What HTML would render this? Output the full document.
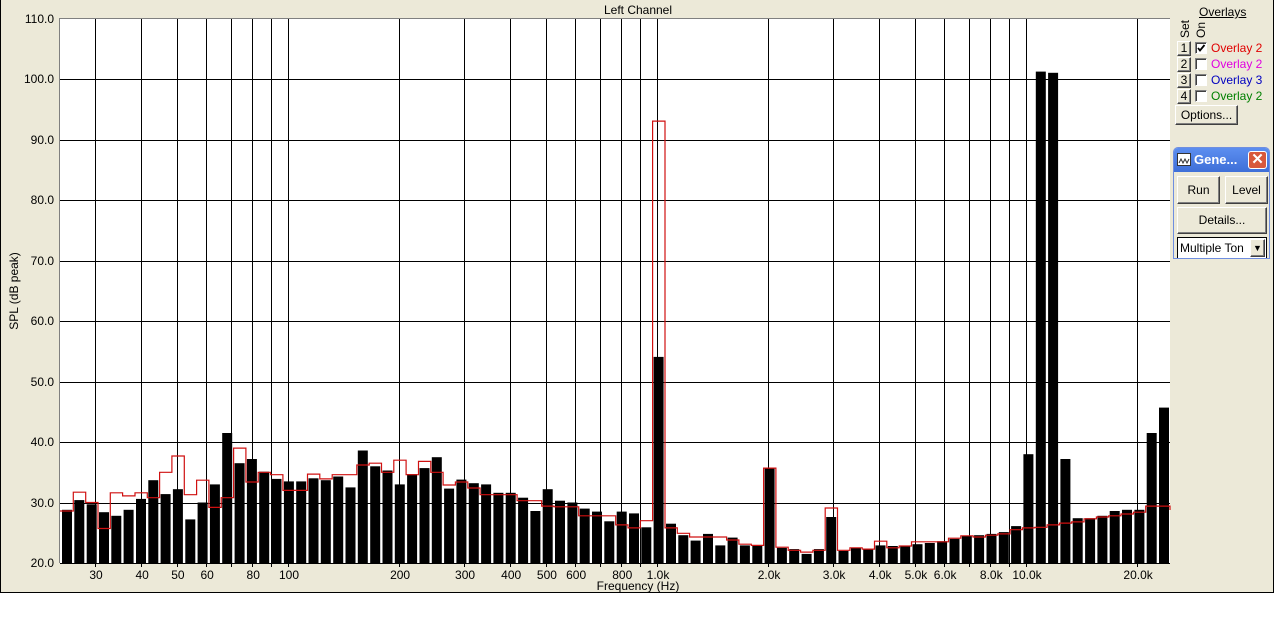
<!DOCTYPE html>
<html><head><meta charset="utf-8">
<style>
html,body{margin:0;padding:0;background:#fff;width:1274px;height:637px;overflow:hidden;font-family:"Liberation Sans",sans-serif;}
#win{position:absolute;left:0;top:0;width:1272px;height:592px;background:#ece9d8;border:1px solid #000;border-top:none;}
svg text{font-family:"Liberation Sans",sans-serif;font-size:12px;fill:#000;}
.btn{position:absolute;background:#ece9d8;border:1px solid;border-color:#fff #404040 #404040 #fff;box-shadow:inset -1px -1px 0 #808080;font-size:12px;text-align:center;box-sizing:border-box;}
.cb{position:absolute;width:12px;height:12px;background:#fff;border:1px solid;border-color:#808080 #fff #fff #808080;box-shadow:inset 1px 1px 0 #404040;box-sizing:border-box;}
.lab{position:absolute;font-size:12px;}
</style></head><body>
<div id="win">
<svg id="ch" width="1274" height="600" style="position:absolute;left:0;top:0"></svg>

<div class="lab" style="left:1198px;top:5px;text-decoration:underline;">Overlays</div>
<div class="lab" style="left:1177px;top:38px;transform:rotate(-90deg);transform-origin:0 0;">Set</div>
<div class="lab" style="left:1193px;top:38px;transform:rotate(-90deg);transform-origin:0 0;">On</div>

<div class="btn" style="left:1176px;top:41px;width:14px;height:15px;line-height:13px;">1</div>
<div class="btn" style="left:1176px;top:57px;width:14px;height:15px;line-height:13px;">2</div>
<div class="btn" style="left:1176px;top:73px;width:14px;height:15px;line-height:13px;">3</div>
<div class="btn" style="left:1176px;top:89px;width:14px;height:15px;line-height:13px;">4</div>
<div class="cb" style="left:1194px;top:42px;"><svg width="10" height="10" style="position:absolute;left:0;top:0"><path d="M2 5 L4 7.5 L8.5 2" stroke="#000" stroke-width="1.8" fill="none"/></svg></div>
<div class="cb" style="left:1194px;top:58px;"></div>
<div class="cb" style="left:1194px;top:74px;"></div>
<div class="cb" style="left:1194px;top:90px;"></div>
<div class="lab" style="left:1210px;top:41px;color:#e00000;">Overlay 2</div>
<div class="lab" style="left:1210px;top:57px;color:#e000e0;">Overlay 2</div>
<div class="lab" style="left:1210px;top:73px;color:#0000c0;">Overlay 3</div>
<div class="lab" style="left:1210px;top:89px;color:#008000;">Overlay 2</div>
<div class="btn" style="left:1174px;top:105px;width:63px;height:20px;line-height:18px;">Options...</div>

<div style="position:absolute;left:1172px;top:147px;width:97px;height:112px;background:#ece9d8;border:1px solid #6f8ee0;box-sizing:border-box;border-radius:5px 5px 0 0;overflow:hidden;">
  <div style="height:24px;background:linear-gradient(#5c8ef0,#3e6fd8);position:relative;">
    <div style="position:absolute;left:3px;top:5px;width:14px;height:13px;background:#fff;border:1px solid #333;box-sizing:border-box;"><svg width="12" height="11"><path d="M1 7 L3 3 L5 7 L7 3 L9 7 L11 3" stroke="#333" fill="none"/></svg></div>
    <div style="position:absolute;left:20px;top:4px;color:#fff;font-weight:bold;font-size:13px;">Gene...</div>
    <div style="position:absolute;left:74px;top:3px;width:19px;height:18px;background:#d8583c;border:1px solid #fff;box-sizing:border-box;border-radius:3px;color:#fff;text-align:center;font-size:15px;line-height:16px;font-weight:bold;">✕</div>
  </div>
  <div class="btn" style="left:3px;top:28px;width:43px;height:28px;line-height:26px;">Run</div>
  <div class="btn" style="left:51px;top:28px;width:43px;height:28px;line-height:26px;">Level</div>
  <div class="btn" style="left:3px;top:59px;width:90px;height:27px;line-height:25px;">Details...</div>
  <div style="position:absolute;left:3px;top:89px;width:90px;height:22px;background:#fff;border:1px solid #000;box-sizing:border-box;font-size:12px;line-height:20px;padding-left:2px;">Multiple Ton<div class="btn" style="left:72px;top:1px;width:15px;height:18px;line-height:16px;font-size:9px;">▼</div></div>
</div>
</div>
<script>
var bars=[28.8,30.4,29.7,28.4,27.8,28.8,30.6,33.7,31.4,32.2,27.2,30,33,41.5,36.5,37.2,35.1,33.9,33.5,33.5,34,33.7,34.3,32.5,38.6,36,35.3,33,34.7,35.7,37.5,32.3,33.8,33.2,33,31.6,31.6,30.8,28.6,32.2,30.3,30,29,28.5,26.9,28.5,28.2,25.9,54.1,26.5,24.6,23.7,24.8,22.9,24.2,22.9,22.9,35.7,22.5,22.3,21.5,22.3,27.6,22,22.5,22.3,22.9,22.8,22.8,23.1,23.3,23.6,24,24.5,24.6,24.8,25.1,26.1,38,101.3,101.1,37.2,27.4,27.4,27.8,28.6,28.8,28.8,41.5,45.7];
var red=[28.6,31.7,30,25.7,31.6,31.1,31.6,30.8,35,37.7,31.3,33.7,29.2,30.8,39,33.4,35,34.6,32,32,34.7,33.9,34.6,34.6,36.2,36.5,35,37,34.6,36.8,35,32.9,33.4,32.4,31.3,31.3,31.3,30.3,30.3,29.4,29.3,29.3,27.8,27.8,27.8,26.3,25.8,27,93.1,25.8,24.9,24.3,24.3,24.3,23.8,23.1,22.9,35.7,22.6,22.1,21.8,22.1,29.1,22.1,22.5,22.3,23.6,22.5,22.8,23.5,23.5,23.5,24.1,24.5,24.3,24.6,24.8,25.5,25.8,25.9,26.3,26.6,26.8,27.3,27.6,27.8,28.1,28.4,29.4,29.4];
function Y(d){return 19+(110-d)*6.044;}
function X(f){return 287+369*Math.log10(f/100);}
var s='';
s+='<text x="637" y="14" text-anchor="middle">Left Channel</text>';
s+='<rect x="59" y="19" width="1110" height="544" fill="#fff"/>';
var fs=[30,40,50,60,70,80,90,100,200,300,400,500,600,700,800,900,1000,2000,3000,4000,5000,6000,7000,8000,9000,10000,20000];
fs.forEach(function(f){var x=Math.round(X(f))+.5;s+='<line x1="'+x+'" y1="19" x2="'+x+'" y2="567" stroke="#000"/>';});
for(var d=30;d<=100;d+=10){var y=Math.round(Y(d))+.5;s+='<line x1="59" y1="'+y+'" x2="1169" y2="'+y+'" stroke="#000"/>';}
for(var d=20;d<=110;d+=10){var y=Math.round(Y(d));s+='<text x="53" y="'+(y+4)+'" text-anchor="end">'+d.toFixed(1)+'</text>';}
var lb=[[30,'30'],[40,'40'],[50,'50'],[60,'60'],[80,'80'],[100,'100'],[200,'200'],[300,'300'],[400,'400'],[500,'500'],[600,'600'],[800,'800'],[1000,'1.0k'],[2000,'2.0k'],[3000,'3.0k'],[4000,'4.0k'],[5000,'5.0k'],[6000,'6.0k'],[8000,'8.0k'],[10000,'10.0k'],[20000,'20.0k']];
lb.forEach(function(l){s+='<text x="'+(X(l[0])+1)+'" y="579" text-anchor="middle">'+l[1]+'</text>';});
s+='<text x="637" y="590" text-anchor="middle">Frequency (Hz)</text>';
s+='<text transform="translate(17,291) rotate(-90)" text-anchor="middle">SPL (dB peak)</text>';
var p=12.326;
for(var i=0;i<90;i++){var x=61+i*p;var y=Y(bars[i]);s+='<rect x="'+x.toFixed(1)+'" y="'+y.toFixed(1)+'" width="10" height="'+(563-y).toFixed(1)+'" fill="#000"/>';}
var d='M59 '+Y(red[0]).toFixed(1);
for(var i=0;i<90;i++){var x0=(i==0?59:60+i*p),x1=(i==89?1169:60+(i+1)*p);var y=Y(red[i]).toFixed(1);d+=' L'+x0.toFixed(1)+' '+y+' L'+x1.toFixed(1)+' '+y;}
d+=' L1169 510';
s+='<path d="'+d+'" fill="none" stroke="#d01010" stroke-width="1.2"/>';
s+='<path d="M58.5 563 L58.5 18.5 L1169 18.5" fill="none" stroke="#808080"/>';
s+='<line x1="59" y1="563.5" x2="1169" y2="563.5" stroke="#000"/>';
document.getElementById('ch').innerHTML=s;
</script>
</body></html>
